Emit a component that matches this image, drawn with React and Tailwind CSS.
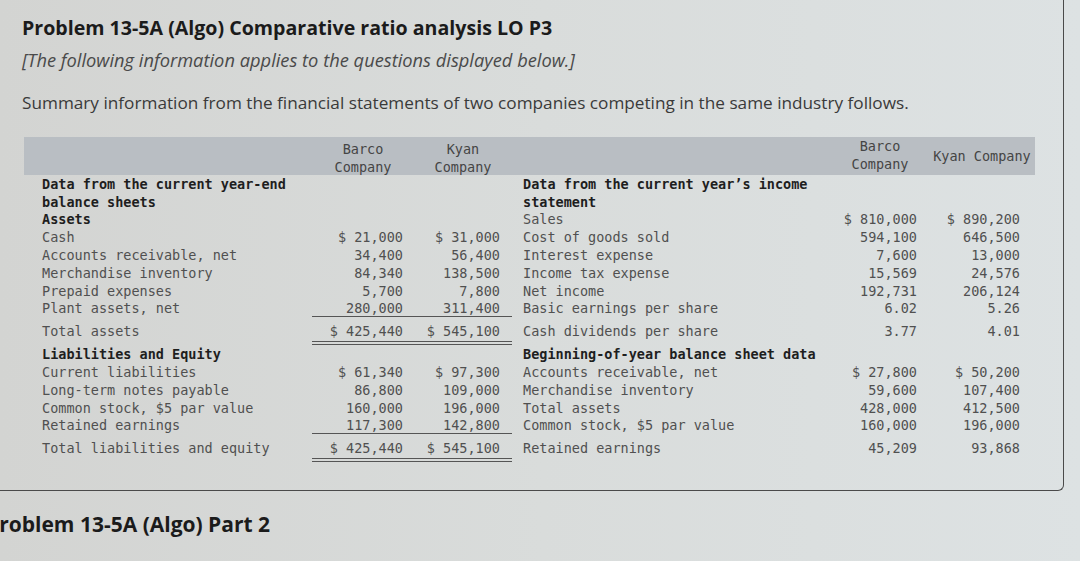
import React from 'react';

const mono = { fontFamily: '"DejaVu Sans Mono", "Liberation Mono", monospace' };
const sans = { fontFamily: '"Open Sans", Lato, Arial, sans-serif' };

const balanceRows = [
  { label: 'Data from the current year-end', bold: true },
  { label: 'balance sheets', bold: true },
  { label: 'Assets', bold: true },
  { label: 'Cash', a: '$ 21,000', b: '$ 31,000' },
  { label: 'Accounts receivable, net', a: '34,400', b: '56,400' },
  { label: 'Merchandise inventory', a: '84,340', b: '138,500' },
  { label: 'Prepaid expenses', a: '5,700', b: '7,800' },
  { label: 'Plant assets, net', a: '280,000', b: '311,400', line: 'single' },
  { label: 'Total assets', a: '$ 425,440', b: '$ 545,100', line: 'double' },
  { label: 'Liabilities and Equity', bold: true },
  { label: 'Current liabilities', a: '$ 61,340', b: '$ 97,300' },
  { label: 'Long-term notes payable', a: '86,800', b: '109,000' },
  { label: 'Common stock, $5 par value', a: '160,000', b: '196,000' },
  { label: 'Retained earnings', a: '117,300', b: '142,800', line: 'single' },
  { label: 'Total liabilities and equity', a: '$ 425,440', b: '$ 545,100', line: 'double' },
];

const incomeRows = [
  { label: 'Data from the current year\u2019s income', bold: true },
  { label: 'statement', bold: true },
  { label: 'Sales', a: '$ 810,000', b: '$ 890,200' },
  { label: 'Cost of goods sold', a: '594,100', b: '646,500' },
  { label: 'Interest expense', a: '7,600', b: '13,000' },
  { label: 'Income tax expense', a: '15,569', b: '24,576' },
  { label: 'Net income', a: '192,731', b: '206,124' },
  { label: 'Basic earnings per share', a: '6.02', b: '5.26', line: 'single' },
  { label: 'Cash dividends per share', a: '3.77', b: '4.01', line: 'double' },
  { label: 'Beginning-of-year balance sheet data', bold: true },
  { label: 'Accounts receivable, net', a: '$ 27,800', b: '$ 50,200' },
  { label: 'Merchandise inventory', a: '59,600', b: '107,400' },
  { label: 'Total assets', a: '428,000', b: '412,500' },
  { label: 'Common stock, $5 par value', a: '160,000', b: '196,000', line: 'single' },
  { label: 'Retained earnings', a: '45,209', b: '93,868', line: 'double' },
];

// row box: totals are taller and carry a double rule under the figures
const boxCls = (r) =>
  r.line === 'double'
    ? 'h-[28px] pt-[3px] border-b-[4px]'
    : r.line === 'single'
    ? 'h-[17.8px] border-b'
    : 'h-[17.8px]';

const ruleCls = (r, show) => {
  if (!r.line) return '';
  if (!show) return 'border-transparent';
  return r.line === 'double' ? 'border-double border-[#555]' : 'border-[#555]';
};

const TableRows = ({ rows, labelW, colA, colB, padA, padB, showLines }) => (
  <>
    {rows.map((r) => (
      <div key={r.label} className="flex">
        <div
          className={`${labelW} ${boxCls(r)} border-transparent flex items-center ${
            r.bold ? 'font-bold text-[#1e1e1e]' : 'text-[#505050]'
          } whitespace-nowrap`}
        >
          {r.label}
        </div>
        <div className={`flex ${boxCls(r)} ${ruleCls(r, showLines)}`}>
          <div className={`${colA} ${padA} flex items-center justify-end text-[#505050]`}>{r.a}</div>
          <div className={`${colB} ${padB} flex items-center justify-end text-[#505050]`}>{r.b}</div>
        </div>
      </div>
    ))}
  </>
);

const BalanceTable = () => (
  <div className="w-[491px]" style={mono}>
    <div className="h-[38px] bg-[#b9bec3] flex items-center text-[#454545]">
      <div className="w-[290px]" />
      <div className="w-[98px] text-center leading-[18px] pt-[4px]">Barco<br />Company</div>
      <div className="w-[102px] text-center leading-[18px] pt-[4px]">Kyan<br />Company</div>
    </div>
    <div className="pl-[18px]">
      <TableRows
        rows={balanceRows}
        labelW="w-[270px]"
        colA="w-[98px]"
        colB="w-[102px]"
        padA="pr-[7px]"
        padB="pr-[12px]"
        showLines
      />
    </div>
  </div>
);

const IncomeTable = () => (
  <div className="w-[520px]" style={mono}>
    <div className="h-[38px] bg-[#b9bec3] flex items-center text-[#454545]">
      <div className="w-[320px]" />
      <div className="w-[90px] text-center leading-[18px] -mt-[2px]">Barco<br />Company</div>
      <div className="w-[110px] text-center pl-[4px]">Kyan Company</div>
    </div>
    <div className="pl-[8px]">
      <TableRows
        rows={incomeRows}
        labelW="w-[312px]"
        colA="w-[90px]"
        colB="w-[110px]"
        padA="pr-[8px]"
        padB="pr-[15px]"
        showLines={false}
      />
    </div>
  </div>
);

export default function App() {
  return (
    <div className="w-[1080px] h-[561px] overflow-hidden bg-gradient-to-r from-[#d3d4d2] via-[#d9dcdb] to-[#dde2e3]">
      <div className="w-[1064px] h-[491px] border-r border-b border-[#4a4a4a] rounded-br-[6px]">
        <div className="pl-[22px] pt-[16px]" style={sans}>
          <h1 className="text-[19.6px] font-bold text-[#1b1b1b] leading-[24px]">
            Problem 13-5A (Algo) Comparative ratio analysis LO P3
          </h1>
          <p className="mt-[8px] text-[18.3px] italic text-[#4a4a4a] leading-[24px]">
            [The following information applies to the questions displayed below.]
          </p>
          <p className="mt-[19px] text-[17.2px] text-[#3a3a3a] leading-[24px]">
            Summary information from the financial statements of two companies competing in the same industry follows.
          </p>
        </div>
        <div className="mt-[22px] pl-[24px] flex text-[13.5px]">
          <BalanceTable />
          <IncomeTable />
        </div>
      </div>
      <div className="mt-[20px] -ml-[14px] text-[21px] font-bold text-[#1b1b1b] leading-[26px]" style={sans}>
        Problem 13-5A (Algo) Part 2
      </div>
    </div>
  );
}
